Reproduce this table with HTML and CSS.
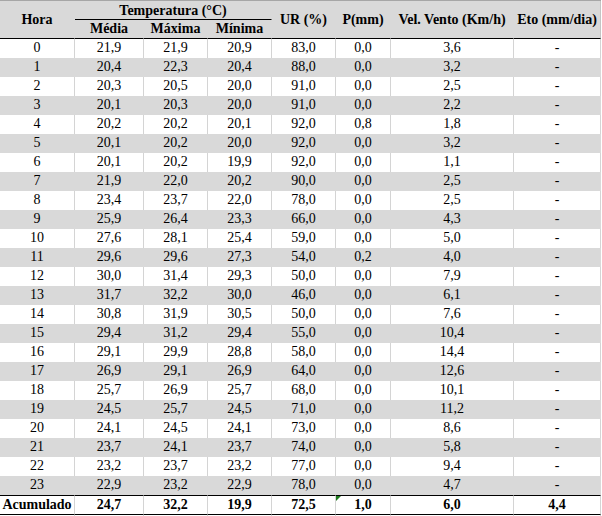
FILE: index.html
```html
<!DOCTYPE html>
<html lang="pt">
<head>
<meta charset="utf-8">
<title>Dados horários</title>
<link rel="stylesheet" href="styles.css">
</head>
<body>
<div class="sheet">
  <div class="hd span2 col1">Hora</div>
  <div class="hd temp">Temperatura (°C)</div>
  <div class="hd span2 col5">UR (%)</div>
  <div class="hd span2 col6">P(mm)</div>
  <div class="hd span2 col7">Vel. Vento (Km/h)</div>
  <div class="hd span2 col8 last">Eto (mm/dia)</div>
  <div class="hd sub col2">Média</div>
  <div class="hd sub col3">Máxima</div>
  <div class="hd sub col4">Mínima</div>

  <div class="row"><div class="c">0</div><div class="c">21,9</div><div class="c">21,9</div><div class="c">20,9</div><div class="c">83,0</div><div class="c">0,0</div><div class="c">3,6</div><div class="c">-</div></div>
  <div class="row alt"><div class="c">1</div><div class="c">20,4</div><div class="c">22,3</div><div class="c">20,4</div><div class="c">88,0</div><div class="c">0,0</div><div class="c">3,2</div><div class="c">-</div></div>
  <div class="row"><div class="c">2</div><div class="c">20,3</div><div class="c">20,5</div><div class="c">20,0</div><div class="c">91,0</div><div class="c">0,0</div><div class="c">2,5</div><div class="c">-</div></div>
  <div class="row alt"><div class="c">3</div><div class="c">20,1</div><div class="c">20,3</div><div class="c">20,0</div><div class="c">91,0</div><div class="c">0,0</div><div class="c">2,2</div><div class="c">-</div></div>
  <div class="row"><div class="c">4</div><div class="c">20,2</div><div class="c">20,2</div><div class="c">20,1</div><div class="c">92,0</div><div class="c">0,8</div><div class="c">1,8</div><div class="c">-</div></div>
  <div class="row alt"><div class="c">5</div><div class="c">20,1</div><div class="c">20,2</div><div class="c">20,0</div><div class="c">92,0</div><div class="c">0,0</div><div class="c">3,2</div><div class="c">-</div></div>
  <div class="row"><div class="c">6</div><div class="c">20,1</div><div class="c">20,2</div><div class="c">19,9</div><div class="c">92,0</div><div class="c">0,0</div><div class="c">1,1</div><div class="c">-</div></div>
  <div class="row alt"><div class="c">7</div><div class="c">21,9</div><div class="c">22,0</div><div class="c">20,2</div><div class="c">90,0</div><div class="c">0,0</div><div class="c">2,5</div><div class="c">-</div></div>
  <div class="row"><div class="c">8</div><div class="c">23,4</div><div class="c">23,7</div><div class="c">22,0</div><div class="c">78,0</div><div class="c">0,0</div><div class="c">2,5</div><div class="c">-</div></div>
  <div class="row alt"><div class="c">9</div><div class="c">25,9</div><div class="c">26,4</div><div class="c">23,3</div><div class="c">66,0</div><div class="c">0,0</div><div class="c">4,3</div><div class="c">-</div></div>
  <div class="row"><div class="c">10</div><div class="c">27,6</div><div class="c">28,1</div><div class="c">25,4</div><div class="c">59,0</div><div class="c">0,0</div><div class="c">5,0</div><div class="c">-</div></div>
  <div class="row alt"><div class="c">11</div><div class="c">29,6</div><div class="c">29,6</div><div class="c">27,3</div><div class="c">54,0</div><div class="c">0,2</div><div class="c">4,0</div><div class="c">-</div></div>
  <div class="row"><div class="c">12</div><div class="c">30,0</div><div class="c">31,4</div><div class="c">29,3</div><div class="c">50,0</div><div class="c">0,0</div><div class="c">7,9</div><div class="c">-</div></div>
  <div class="row alt"><div class="c">13</div><div class="c">31,7</div><div class="c">32,2</div><div class="c">30,0</div><div class="c">46,0</div><div class="c">0,0</div><div class="c">6,1</div><div class="c">-</div></div>
  <div class="row"><div class="c">14</div><div class="c">30,8</div><div class="c">31,9</div><div class="c">30,5</div><div class="c">50,0</div><div class="c">0,0</div><div class="c">7,6</div><div class="c">-</div></div>
  <div class="row alt"><div class="c">15</div><div class="c">29,4</div><div class="c">31,2</div><div class="c">29,4</div><div class="c">55,0</div><div class="c">0,0</div><div class="c">10,4</div><div class="c">-</div></div>
  <div class="row"><div class="c">16</div><div class="c">29,1</div><div class="c">29,9</div><div class="c">28,8</div><div class="c">58,0</div><div class="c">0,0</div><div class="c">14,4</div><div class="c">-</div></div>
  <div class="row alt"><div class="c">17</div><div class="c">26,9</div><div class="c">29,1</div><div class="c">26,9</div><div class="c">64,0</div><div class="c">0,0</div><div class="c">12,6</div><div class="c">-</div></div>
  <div class="row"><div class="c">18</div><div class="c">25,7</div><div class="c">26,9</div><div class="c">25,7</div><div class="c">68,0</div><div class="c">0,0</div><div class="c">10,1</div><div class="c">-</div></div>
  <div class="row alt"><div class="c">19</div><div class="c">24,5</div><div class="c">25,7</div><div class="c">24,5</div><div class="c">71,0</div><div class="c">0,0</div><div class="c">11,2</div><div class="c">-</div></div>
  <div class="row"><div class="c">20</div><div class="c">24,1</div><div class="c">24,5</div><div class="c">24,1</div><div class="c">73,0</div><div class="c">0,0</div><div class="c">8,6</div><div class="c">-</div></div>
  <div class="row alt"><div class="c">21</div><div class="c">23,7</div><div class="c">24,1</div><div class="c">23,7</div><div class="c">74,0</div><div class="c">0,0</div><div class="c">5,8</div><div class="c">-</div></div>
  <div class="row"><div class="c">22</div><div class="c">23,2</div><div class="c">23,7</div><div class="c">23,2</div><div class="c">77,0</div><div class="c">0,0</div><div class="c">9,4</div><div class="c">-</div></div>
  <div class="row alt"><div class="c">23</div><div class="c">22,9</div><div class="c">23,2</div><div class="c">22,9</div><div class="c">78,0</div><div class="c">0,0</div><div class="c">4,7</div><div class="c">-</div></div>

  <div class="row total"><div class="c">Acumulado</div><div class="c">24,7</div><div class="c">32,2</div><div class="c">19,9</div><div class="c">72,5</div><div class="c flagged"><span class="flag"></span>1,0</div><div class="c">6,0</div><div class="c">4,4</div></div>
  <div class="row"><div class="c"></div><div class="c"></div><div class="c"></div><div class="c"></div><div class="c"></div><div class="c"></div><div class="c"></div><div class="c"></div></div>
</div>
</body>
</html>
```

FILE: styles.css
```css
html, body {
  margin: 0;
  padding: 0;
  background: #ffffff;
}

body {
  font-family: "Liberation Serif", "Times New Roman", serif;
  font-size: 14px;
  color: #000000;
}

.sheet {
  display: grid;
  grid-template-columns: 75px 69px 64px 64px 64px 55px 123px 87px;
  grid-template-rows: 19px 19px repeat(24, 19px) 20px;
  grid-auto-rows: 19px;
  width: 601px;
  border-top: 1px solid #a6a6a6;
}

.row {
  display: contents;
}

.c {
  box-sizing: border-box;
  border-right: 1px solid #d4d4d4;
  text-align: center;
  line-height: 18px;
  white-space: nowrap;
  background: #ffffff;
}

.alt .c {
  background: #d9d9d9;
  border-right-color: #d9d9d9;
}

.hd {
  box-sizing: border-box;
  background: #d9d9d9;
  border-right: 1px solid #d9d9d9;
  font-weight: bold;
  display: flex;
  align-items: center;
  justify-content: center;
  white-space: nowrap;
}

.hd.last {
  border-right-color: #c4c4c4;
}

.span2 {
  grid-row: 1 / 3;
  border-bottom: 1px solid #000000;
}

.col1 { grid-column: 1; }
.col2 { grid-column: 2; }
.col3 { grid-column: 3; }
.col4 { grid-column: 4; }
.col5 { grid-column: 5; }
.col6 { grid-column: 6; }
.col7 { grid-column: 7; }
.col8 { grid-column: 8; }

.temp {
  grid-column: 2 / 5;
  grid-row: 1;
  border-bottom: 1px solid #000000;
  padding-top: 1px;
}

.sub {
  grid-row: 2;
  border-bottom: 1px solid #000000;
}

.total .c {
  font-weight: bold;
  border-top: 1px solid #000000;
  border-bottom: 1px solid #000000;
  line-height: 17px;
}

.flagged {
  position: relative;
}

.flag {
  position: absolute;
  top: 0;
  left: 0;
  width: 0;
  height: 0;
  border-top: 5px solid #1e7b1e;
  border-right: 5px solid transparent;
}
```
